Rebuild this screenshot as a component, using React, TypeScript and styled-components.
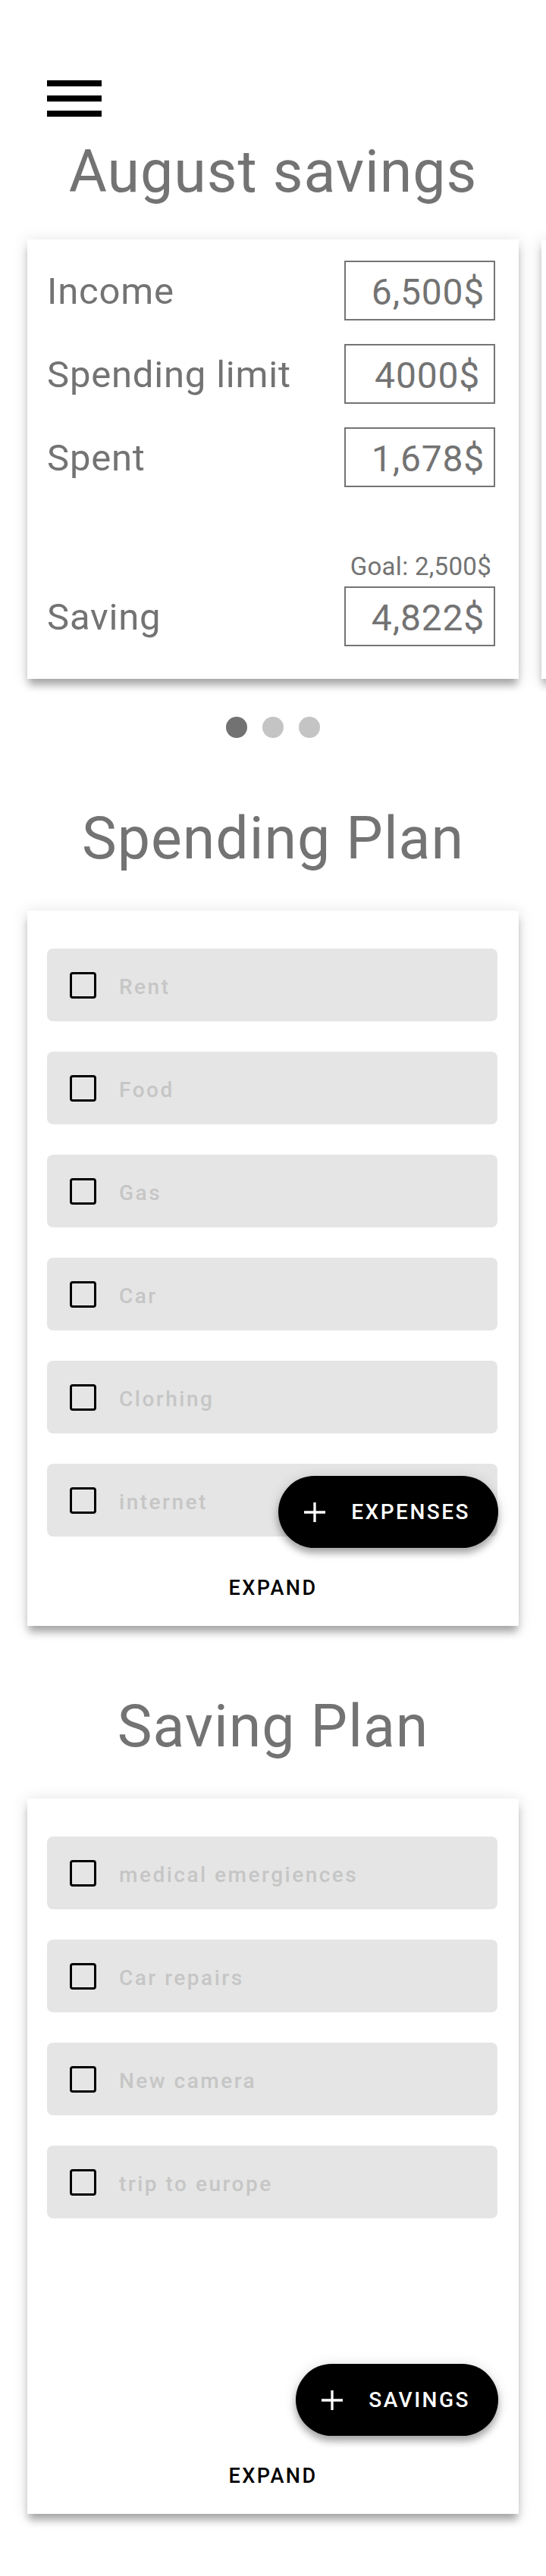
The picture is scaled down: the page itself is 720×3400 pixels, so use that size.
import React from "react";
import styled, { createGlobalStyle } from "styled-components";

const GlobalStyle = createGlobalStyle`
  html, body {
    margin: 0;
    padding: 0;
    background: #ffffff;
  }
  body {
    font-family: Roboto, "Liberation Sans", Arial, sans-serif;
  }
  *, *::before, *::after {
    box-sizing: border-box;
  }
`;

const TEXT_GRAY = "#737373";

const Page = styled.div`
  width: 720px;
  min-height: 3400px;
  display: flex;
  flex-direction: column;
  background: #ffffff;
  overflow: hidden;
`;

const Header = styled.header`
  display: flex;
  padding: 82px 0 0 50px;
`;

const MenuButton = styled.button`
  width: 96px;
  height: 96px;
  padding: 0;
  border: 0;
  background: none;
  display: block;
  cursor: pointer;
`;

const Title = styled.h1<{ $top: number }>`
  margin: ${(p) => p.$top}px 0 0;
  font-size: 77px;
  font-weight: 400;
  line-height: 90px;
  letter-spacing: 1px;
  text-align: center;
  color: ${TEXT_GRAY};
`;

const Carousel = styled.div`
  margin-top: 20px;
  overflow: hidden;
  padding: 24px 0 30px 36px;
`;

const Track = styled.div`
  display: flex;
  gap: 30px;
  width: max-content;
`;

const cardShadow = `
  box-shadow: 0 10px 10px -2px rgba(0, 0, 0, 0.3),
    0 2px 18px 2px rgba(0, 0, 0, 0.1);
`;

const SummaryCard = styled.section`
  width: 648px;
  flex-shrink: 0;
  background: #ffffff;
  ${cardShadow}
  display: flex;
  flex-direction: column;
  gap: 31px;
  padding: 28px 31px 43px 26px;
`;

const PeekCard = styled.div`
  width: 648px;
  flex-shrink: 0;
  background: #ffffff;
  ${cardShadow}
`;

const SummaryRow = styled.div<{ $last?: boolean }>`
  display: flex;
  justify-content: space-between;
  align-items: ${(p) => (p.$last ? "flex-end" : "center")};
  margin-top: ${(p) => (p.$last ? 55 : 0)}px;
`;

const Label = styled.span`
  height: 79px;
  font-size: 49px;
  line-height: 76px;
  letter-spacing: 0.8px;
  padding-top: 3px;
  color: ${TEXT_GRAY};
`;

const ValueColumn = styled.div`
  display: flex;
  flex-direction: column;
  align-items: flex-end;
`;

const Goal = styled.span`
  font-size: 33px;
  line-height: 38px;
  letter-spacing: 0.3px;
  margin: 0 5px 7px 0;
  color: ${TEXT_GRAY};
`;

const ValueBox = styled.div<{ $inset: number }>`
  width: 199px;
  height: 79px;
  border: 2px solid #747474;
  display: flex;
  align-items: center;
  justify-content: flex-end;
  padding: 3px ${(p) => p.$inset}px 0 0;
  font-size: 48px;
  letter-spacing: 0.8px;
  color: ${TEXT_GRAY};
`;

const Dots = styled.div`
  display: flex;
  justify-content: center;
  gap: 20px;
  margin-top: 20px;
`;

const Dot = styled.span<{ $active?: boolean }>`
  width: 28px;
  height: 28px;
  border-radius: 50%;
  background: ${(p) => (p.$active ? "#727272" : "#c4c4c4")};
`;

const PlanCard = styled.section`
  position: relative;
  margin: 50px 36px 0;
  height: 944px;
  background: #ffffff;
  ${cardShadow}
  display: flex;
  flex-direction: column;
  padding-top: 50px;
`;

const ItemList = styled.div`
  flex: 1;
  display: flex;
  flex-direction: column;
  gap: 40px;
  padding: 0 28px 0 26px;
`;

const ItemRow = styled.label`
  height: 96px;
  border-radius: 8px;
  background: #e5e5e5;
  display: flex;
  align-items: center;
  gap: 30px;
  padding-left: 30px;
`;

const Checkbox = styled.input.attrs({ type: "checkbox" })`
  appearance: none;
  -webkit-appearance: none;
  margin: 0;
  width: 35px;
  height: 35px;
  flex-shrink: 0;
  border: 3px solid #000000;
  border-radius: 4px;
  background: transparent;
`;

const ItemText = styled.span`
  font-size: 28px;
  font-weight: 500;
  letter-spacing: 2.5px;
  padding-top: 4px;
  color: #c6c6c6;
`;

const Footer = styled.div`
  height: 118px;
  display: flex;
  justify-content: center;
  align-items: flex-start;
  padding-top: 32px;
`;

const ExpandButton = styled.button`
  height: 72px;
  padding: 0 16px;
  border: 0;
  background: none;
  font-family: inherit;
  font-size: 27px;
  font-weight: 500;
  letter-spacing: 2.5px;
  color: #000000;
  cursor: pointer;
`;

const Fab = styled.button`
  position: absolute;
  right: 27px;
  bottom: 103px;
  height: 95px;
  border: 0;
  border-radius: 48px;
  background: #000000;
  color: #ffffff;
  display: flex;
  align-items: center;
  gap: 34px;
  padding: 0 37px 0 34px;
  font-family: inherit;
  font-size: 28px;
  font-weight: 500;
  letter-spacing: 2.5px;
  box-shadow: 0 7px 10px rgba(0, 0, 0, 0.3), 0 1px 18px rgba(0, 0, 0, 0.12);
  cursor: pointer;
`;

const MenuIcon = () => (
  <svg width="96" height="96" viewBox="0 0 24 24" aria-hidden="true">
    <rect x="3" y="6" width="18" height="2" fill="#000" />
    <rect x="3" y="11" width="18" height="2" fill="#000" />
    <rect x="3" y="16" width="18" height="2" fill="#000" />
  </svg>
);

const PlusIcon = () => (
  <svg width="28" height="28" viewBox="0 0 28 28" aria-hidden="true">
    <path d="M14 1 V27 M0 14 H28" stroke="#fff" strokeWidth="3.3" fill="none" />
  </svg>
);

type SummaryItem = { label: string; value: string; inset?: number };

const summary: SummaryItem[] = [
  { label: "Income", value: "6,500$" },
  { label: "Spending limit", value: "4000$", inset: 18 },
  { label: "Spent", value: "1,678$" },
];

const spending = ["Rent", "Food", "Gas", "Car", "Clorhing", "internet"];
const saving = ["medical emergiences", "Car repairs", "New camera", "trip to europe"];

const Summary = () => (
  <SummaryCard>
    {summary.map((s) => (
      <SummaryRow key={s.label}>
        <Label>{s.label}</Label>
        <ValueBox $inset={s.inset ?? 12}>{s.value}</ValueBox>
      </SummaryRow>
    ))}
    <SummaryRow $last>
      <Label>Saving</Label>
      <ValueColumn>
        <Goal>Goal: 2,500$</Goal>
        <ValueBox $inset={12}>4,822$</ValueBox>
      </ValueColumn>
    </SummaryRow>
  </SummaryCard>
);

const Plan = ({ items, action }: { items: string[]; action: string }) => (
  <PlanCard>
    <ItemList>
      {items.map((item) => (
        <ItemRow key={item}>
          <Checkbox />
          <ItemText>{item}</ItemText>
        </ItemRow>
      ))}
    </ItemList>
    <Footer>
      <ExpandButton>EXPAND</ExpandButton>
    </Footer>
    <Fab>
      <PlusIcon />
      {action}
    </Fab>
  </PlanCard>
);

export default function App() {
  return (
    <>
      <GlobalStyle />
      <Page>
        <Header>
          <MenuButton aria-label="menu">
            <MenuIcon />
          </MenuButton>
        </Header>
        <Title $top={4}>August savings</Title>
        <Carousel>
          <Track>
            <Summary />
            <PeekCard aria-hidden="true" />
            <PeekCard aria-hidden="true" />
          </Track>
        </Carousel>
        <Dots>
          <Dot $active />
          <Dot />
          <Dot />
        </Dots>
        <Title $top={88}>Spending Plan</Title>
        <Plan items={spending} action="EXPENSES" />
        <Title $top={88}>Saving Plan</Title>
        <Plan items={saving} action="SAVINGS" />
      </Page>
    </>
  );
}
